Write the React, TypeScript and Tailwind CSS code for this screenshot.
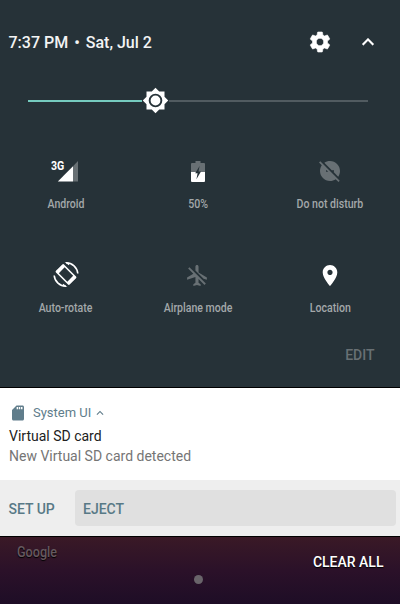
import type { ReactNode } from "react";

const paths = {
  settings:
    "M19.43 12.98c.04-.32.07-.64.07-.98s-.03-.66-.07-.98l2.11-1.65c.19-.15.24-.42.12-.64l-2-3.46c-.12-.22-.39-.3-.61-.22l-2.49 1c-.52-.4-1.08-.73-1.69-.98l-.38-2.65C14.46 2.18 14.25 2 14 2h-4c-.25 0-.46.18-.49.42l-.38 2.65c-.61.25-1.17.59-1.69.98l-2.49-1c-.23-.09-.49 0-.61.22l-2 3.46c-.13.22-.07.49.12.64l2.11 1.65c-.04.32-.07.65-.07.98s.03.66.07.98l-2.11 1.65c-.19.15-.24.42-.12.64l2 3.46c.12.22.39.3.61.22l2.49-1c.52.4 1.08.73 1.69.98l.38 2.65c.03.24.24.42.49.42h4c.25 0 .46-.18.49-.42l.38-2.65c.61-.25 1.17-.59 1.69-.98l2.49 1c.23.09.49 0 .61-.22l2-3.46c.12-.22.07-.49-.12-.64l-2.11-1.65zM12 15.7c-2.04 0-3.7-1.66-3.7-3.7s1.66-3.7 3.7-3.7 3.7 1.66 3.7 3.7-1.66 3.7-3.7 3.7z",
  chevron: "M12 8l-6 6 1.41 1.41L12 10.83l4.59 4.58L18 14z",
  dndOff:
    "M16 11.2v1.6h-.66l4.88 4.88C21.34 16.07 22 14.11 22 12c0-5.52-4.48-10-10-10-2.11 0-4.07.66-5.68 1.78L13.74 11.2H16zM2.27 2.27L1 3.54l2.78 2.78C2.66 7.93 2 9.89 2 12c0 5.52 4.48 10 10 10 2.11 0 4.07-.66 5.68-1.78L20.46 23l1.27-1.27L11 11 2.27 2.27zM8 12.8v-1.6h.66l1.6 1.6H8z",
  airplaneOff:
    "M13 9V3.5c0-.83-.67-1.5-1.5-1.5S10 2.67 10 3.5v3.68l7.83 7.83L21 16v-2l-8-5zM3 5.27l4.99 4.99L2 14v2l8-2.5V19l-2 1.5V22l3.5-1 3.5 1v-1.5L13 19v-3.73L18.73 21 20 19.73 4.27 4 3 5.27z",
  place:
    "M12 2C8.13 2 5 5.13 5 9c0 5.25 7 13 7 13s7-7.75 7-13c0-3.87-3.13-7-7-7zm0 9.5c-1.38 0-2.5-1.12-2.5-2.5s1.12-2.5 2.5-2.5 2.5 1.12 2.5 2.5-1.12 2.5-2.5 2.5z",
  sdCard:
    "M18 2h-8L4.02 8 4 20c0 1.1.9 2 2 2h12c1.1 0 2-.9 2-2V4c0-1.1-.9-2-2-2zm-6 5h-1.8V4H12v3zm3 0h-2V4h2v3zm3 0h-2V4h2v3z",
};

function Icon({ d, className }: { d: string; className: string }) {
  return (
    <svg viewBox="0 0 24 24" fill="currentColor" className={`shrink-0 ${className}`}>
      <path d={d} />
    </svg>
  );
}

function Signal() {
  return (
    <div className="relative h-[21px] w-[27px] -translate-x-[2px]">
      <svg viewBox="0 0 27 21" className="h-full w-full">
        <path d="M22 5.2V20.5H6.8z" fill="#fff" />
        <path d="M22 5.2L27 0V20.5H22z" fill="#687074" />
      </svg>
      <span className="absolute top-0 left-0 origin-left scale-x-[0.88] text-[12px] leading-[11px] font-bold text-white [text-shadow:1px_1px_0_#263238]">
        3G
      </span>
    </div>
  );
}

function Battery() {
  return (
    <svg viewBox="0 0 14 21" className="h-[21px] w-[14px]">
      <path fill="#687074" d="M1 2H4.5V0H9.5V2H13Q14 2 14 3V11.5H0V3Q0 2 1 2z" />
      <path fill="#fff" d="M0 11H14V20Q14 21 13 21H1Q0 21 0 20z" />
      <path fill="#263238" d="M8.6 5L4.2 12.2H6.6L5.4 18.2L10 10.6H7.5z" />
    </svg>
  );
}

function AutoRotate() {
  return (
    <svg viewBox="0 0 26 26" className="h-[26px] w-[26px] -translate-y-[0.5px]" fill="none" stroke="#fff">
      <g transform="rotate(-45 13 13)">
        <path
          fill="#fff"
          stroke="none"
          fillRule="evenodd"
          d="M8.5 3.3H17.5Q18.7 3.3 18.7 4.5V21.5Q18.7 22.7 17.5 22.7H8.5Q7.3 22.7 7.3 21.5V4.5Q7.3 3.3 8.5 3.3zM8.9 7V19H17.1V7z"
        />
      </g>
      <path strokeWidth="1.6" d="M13 1.2A11.8 11.8 0 0 1 24.8 12" />
      <path strokeWidth="1.6" d="M13 24.8A11.8 11.8 0 0 1 1.2 14" />
      <path fill="#fff" stroke="none" d="M11.6 .4L17 1.4L15.8 3.8z" />
      <path fill="#fff" stroke="none" d="M14.4 25.6L9 24.6L10.2 22.2z" />
    </svg>
  );
}

function Tile({ label, children }: { label: string; children: ReactNode }) {
  return (
    <div className="flex h-[104px] flex-col items-center">
      <div className="flex h-[26px] items-center justify-center">{children}</div>
      <span className="mt-[11px] scale-x-[0.88] text-[12px] leading-[18px] font-medium whitespace-nowrap text-[#a3a8aa]">
        {label}
      </span>
    </div>
  );
}

export default function App() {
  return (
    <main className="flex h-[604px] w-[400px] flex-col overflow-hidden bg-black font-[Roboto,sans-serif]">
      <section className="h-[388px] border-b border-black bg-[#263238]">
        <header className="flex h-[85px] items-center pr-[20px] pl-[8.5px] text-white">
          <div className="flex gap-[6px] text-[16px] leading-[24px] font-medium text-[#f3f4f4]">
            <span>7:37 PM</span>
            <span>•</span>
            <span>Sat, Jul 2</span>
          </div>
          <Icon d={paths.settings} className="mt-[-0.5px] ml-auto h-6 w-6 stroke-white [stroke-width:0.6]" />
          <Icon d={paths.chevron} className="-mt-px ml-[24px] h-6 w-6 stroke-white [stroke-width:0.2]" />
        </header>

        <div className="mt-[2px] ml-[28px] flex h-[27px] w-[340px] items-center">
          <div className="h-[2px] w-[114px] bg-[#75cbbf]" />
          <svg viewBox="0 0 24 24" className="h-[27px] w-[27px] shrink-0">
            <path
              fill="#fff"
              d="M20 8.69V4h-4.69L12 .69 8.69 4H4v4.69L.69 12 4 15.31V20h4.69L12 23.31 15.31 20H20v-4.69L23.31 12z"
            />
            <circle cx="12" cy="12" r="5.2" fill="none" stroke="#263238" strokeWidth="1.7" />
          </svg>
          <div className="h-[2px] flex-1 bg-[#515b60]" />
        </div>

        <div className="mt-[44px] grid grid-cols-3 pr-[4px]">
          <Tile label="Android">
            <Signal />
          </Tile>
          <Tile label="50%">
            <Battery />
          </Tile>
          <Tile label="Do not disturb">
            <Icon d={paths.dndOff} className="h-6 w-6 text-[#687074]" />
          </Tile>
          <Tile label="Auto-rotate">
            <AutoRotate />
          </Tile>
          <Tile label="Airplane mode">
            <Icon d={paths.airplaneOff} className="h-[25px] w-[25px] -translate-x-px text-[#687074]" />
          </Tile>
          <Tile label="Location">
            <Icon d={paths.place} className="h-[25px] w-[25px] -translate-x-[0.5px] text-white" />
          </Tile>
        </div>
        <div className="-mt-[21px] flex justify-end pr-[25.5px] text-[14px] leading-[20px] font-medium text-[#687074]">
          EDIT
        </div>
      </section>

      <section className="h-[92px] bg-white pt-[15px] pl-[9px]">
        <div className="flex h-[20px] items-center text-[13px] text-[#607d8b]">
          <Icon d={paths.sdCard} className="h-[18px] w-[18px]" />
          <span className="ml-[6px]">System UI</span>
          <Icon d={paths.chevron} className="-mt-px ml-[2px] h-[14px] w-[14px]" />
        </div>
        <div className="mt-[3px] text-[14px] leading-[20px] text-[#212121]">Virtual SD card</div>
        <div className="text-[14px] leading-[20px] text-[#757575]">New Virtual SD card detected</div>
      </section>
      <section className="flex h-[57px] items-center border-b border-black bg-[#eee] pr-1 pl-[8.5px] text-[14px] font-medium text-[#587986]">
        <span className="w-[66.5px] pt-[2px]">SET UP</span>
        <div className="flex h-[36px] flex-1 items-center rounded-sm bg-[#e0e0e0] pt-[2px] pl-2">EJECT</div>
      </section>

      <footer className="relative flex-1 bg-linear-to-b from-[#3a1926] via-[#2b1129] to-[#1e0d26]">
        <span className="absolute top-[5px] left-[17px] origin-left scale-x-[0.9] text-[14px] leading-[20px] font-medium text-[#66595f] [text-shadow:0_1px_1px_#000]">
          Google
        </span>
        <span className="absolute top-[38px] left-[194px] h-[9px] w-[9px] rounded-full bg-[#69646a]" />
        <span className="absolute top-[15px] right-[16.5px] text-[14px] leading-[20px] font-medium text-white [text-shadow:0_1px_1px_#000]">
          CLEAR ALL
        </span>
      </footer>
    </main>
  );
}
